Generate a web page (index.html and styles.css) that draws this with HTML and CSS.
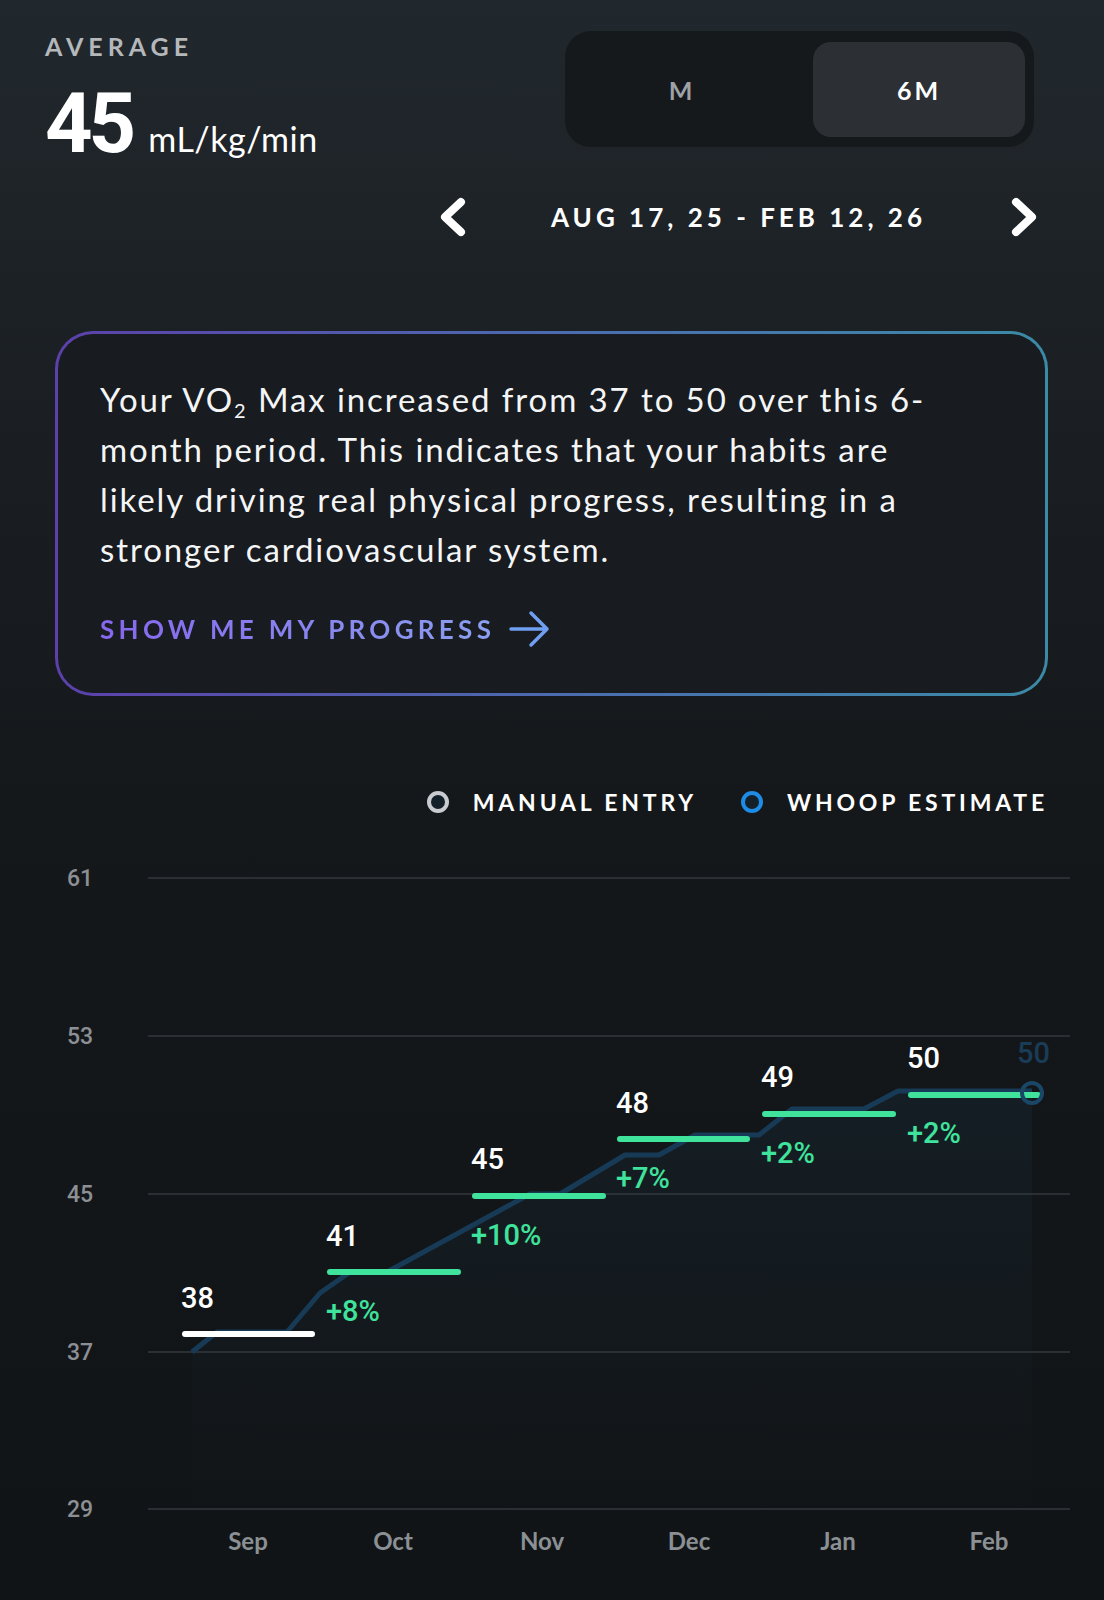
FILE: index.html
```html
<!DOCTYPE html>
<html lang="en">

<head>
    <meta charset="UTF-8">
    <meta name="viewport" content="width=device-width, initial-scale=1.0">
    <title>VO2 Max</title>
    <link rel="stylesheet" href="styles.css">
</head>

<body>
    <div id="main">
        <div class="top">
            <div class="average">
                <div class="average-label">AVERAGE</div>
                <div class="average-value">
                    <span class="big-number">45</span>
                    <span class="unit">mL/kg/min</span>
                </div>
            </div>
            <div class="range">
                <div class="toggle">
                    <div class="toggle-item">M</div>
                    <div class="toggle-item active">6M</div>
                </div>
                <div class="date-nav">
                    <svg class="chevron" width="30" height="40" viewBox="0 0 30 40">
                        <path d="M24 5 L8 20 L24 35" />
                    </svg>
                    <div class="date-text">AUG 17, 25 - FEB 12, 26</div>
                    <svg class="chevron" width="30" height="40" viewBox="0 0 30 40">
                        <path d="M6 5 L22 20 L6 35" />
                    </svg>
                </div>
            </div>
        </div>

        <div class="insight">
            <p class="insight-text">Your VO<sub>2</sub> Max increased from 37 to 50 over this 6-<br>month period. This indicates that your habits are<br>likely driving real physical progress, resulting in a<br>stronger cardiovascular system.</p>
            <div class="insight-link">
                <span class="link-text">SHOW ME MY PROGRESS</span>
                <svg width="42" height="40" viewBox="0 0 42 40">
                    <path d="M2 20 H38 M22 4 L38 20 L22 36" />
                </svg>
            </div>
        </div>

        <div class="legend">
            <div class="legend-item"><span class="dot dot-manual"></span>MANUAL ENTRY</div>
            <div class="legend-item"><span class="dot dot-whoop"></span>WHOOP ESTIMATE</div>
        </div>

        <svg class="chart" width="1104" height="720" viewBox="0 850 1104 720">
            <defs>
                <linearGradient id="area" x1="0" y1="0" x2="0" y2="1">
                    <stop offset="0" stop-color="#1a4058" stop-opacity="0.18" />
                    <stop offset="1" stop-color="#1a4058" stop-opacity="0" />
                </linearGradient>
            </defs>
            <!-- grid -->
            <g class="grid">
                <line x1="148" y1="878" x2="1070" y2="878" />
                <line x1="148" y1="1036" x2="1070" y2="1036" />
                <line x1="148" y1="1194" x2="1070" y2="1194" />
                <line x1="148" y1="1352" x2="1070" y2="1352" />
                <line x1="148" y1="1509" x2="1070" y2="1509" />
            </g>
            <g class="axis-y">
                <text x="67" y="886">61</text>
                <text x="67" y="1044">53</text>
                <text x="67" y="1202">45</text>
                <text x="67" y="1360">37</text>
                <text x="67" y="1517">29</text>
            </g>
            <!-- whoop estimate -->
            <path class="area" d="M192 1352 L217 1332 L287 1332 L320 1293 L350 1272 L387 1272 L530 1194 L560 1194 L625 1155 L659 1155 L695 1135 L759 1135 L792 1109 L864 1109 L898 1091 L1032 1091 L1032 1509 L192 1509 Z" />
            <path class="estimate" d="M192 1352 L217 1332 L287 1332 L320 1293 L350 1272 L387 1272 L530 1194 L560 1194 L625 1155 L659 1155 L695 1135 L759 1135 L792 1109 L864 1109 L898 1091 L1032 1091" />
            <!-- manual entries -->
            <line class="seg seg-first" x1="185" y1="1334" x2="312" y2="1334" />
            <line class="seg" x1="330" y1="1272" x2="458" y2="1272" />
            <line class="seg" x1="475" y1="1196" x2="603" y2="1196" />
            <line class="seg" x1="620" y1="1139" x2="747" y2="1139" />
            <line class="seg" x1="765" y1="1114" x2="893" y2="1114" />
            <line class="seg" x1="911" y1="1095" x2="1038" y2="1095" />
            <circle class="end-dot" cx="1032" cy="1093" r="10" />
            <g class="values">
                <text x="181" y="1308">38</text>
                <text x="326" y="1246">41</text>
                <text x="471" y="1169">45</text>
                <text x="616" y="1113">48</text>
                <text x="761" y="1087">49</text>
                <text x="907" y="1068">50</text>
            </g>
            <text class="value-faded" x="1017" y="1063">50</text>
            <g class="changes">
                <text x="326" y="1321">+8%</text>
                <text x="471" y="1245">+10%</text>
                <text x="616" y="1188">+7%</text>
                <text x="761" y="1163">+2%</text>
                <text x="907" y="1143">+2%</text>
            </g>
            <g class="axis-x">
                <text x="248" y="1550">Sep</text>
                <text x="393" y="1550">Oct</text>
                <text x="542" y="1550">Nov</text>
                <text x="689" y="1550">Dec</text>
                <text x="838" y="1550">Jan</text>
                <text x="989" y="1550">Feb</text>
            </g>
        </svg>
    </div>
</body>

</html>
```

FILE: styles.css
```css
body,
html {
    margin: 0;
    padding: 0;
}

body {
    background: linear-gradient(180deg, #21282d 0px, #1c2125 300px, #15181b 800px, #111416 1600px);
    min-height: 1600px;
    color: #fff;
    font-family: "Lato", "Liberation Sans", sans-serif;
}

#main {
    width: 1104px;
}

.top {
    display: flex;
    justify-content: space-between;
    padding: 31px 64px 0 45px;
}

.average-label {
    margin-top: 3px;
    font-size: 25px;
    line-height: 25px;
    font-weight: 700;
    letter-spacing: 5px;
    color: #b4b8bb;
}

.average-value {
    display: flex;
    align-items: baseline;
    margin-top: 23px;
}

.big-number {
    font-family: "Roboto", sans-serif;
    font-size: 83px;
    line-height: 83px;
    font-weight: 700;
    letter-spacing: -4px;
}

.unit {
    margin-left: 16px;
    font-size: 34px;
    letter-spacing: 0.5px;
}

.range {
    display: flex;
    flex-direction: column;
    align-items: flex-end;
    width: 603px;
}

.toggle {
    display: grid;
    grid-template-columns: 214px 212px;
    column-gap: 24px;
    height: 95px;
    padding: 11px 9px 10px 10px;
    margin-right: 6px;
    background: #16191c;
    border-radius: 26px;
}

.toggle-item {
    display: flex;
    align-items: center;
    justify-content: center;
    font-size: 25px;
    font-weight: 700;
    letter-spacing: 3px;
    color: #9ea2a6;
    border-radius: 18px;
}

.toggle-item.active {
    background: #2c3034;
    color: #fff;
}

.date-nav {
    display: flex;
    justify-content: space-between;
    align-items: center;
    width: 603px;
    height: 40px;
    margin-top: 50px;
}

.chevron path {
    fill: none;
    stroke: #fff;
    stroke-width: 8;
    stroke-linecap: round;
    stroke-linejoin: round;
}

.date-text {
    font-size: 26px;
    font-weight: 700;
    letter-spacing: 4px;
}

.insight {
    width: 993px;
    margin: 94px 0 0 55px;
    padding: 40px 0 44px 42px;
    box-sizing: border-box;
    border: 3px solid transparent;
    border-radius: 38px;
    background: linear-gradient(#181b1f, #181b1f) padding-box,
        linear-gradient(90deg, #5c40ab, #4a6fb0 55%, #3b8aa6) border-box;
}

.insight-text {
    margin: 0;
    font-size: 33px;
    line-height: 50px;
    letter-spacing: 1.9px;
    color: #f4f5f6;
}

.insight-text sub {
    font-size: 20px;
    line-height: 0;
    vertical-align: -6px;
}

.insight-link {
    display: flex;
    align-items: center;
    height: 40px;
    margin-top: 35px;
}

.link-text {
    font-size: 26px;
    font-weight: 700;
    letter-spacing: 4.3px;
    background: linear-gradient(90deg, #8667ee, #8b9ff0);
    -webkit-background-clip: text;
    background-clip: text;
    color: transparent;
}

.insight-link svg {
    margin-left: 14px;
}

.insight-link path {
    fill: none;
    stroke: #6f9ff0;
    stroke-width: 3.5;
    stroke-linecap: round;
    stroke-linejoin: round;
}

.legend {
    display: flex;
    justify-content: flex-end;
    align-items: center;
    gap: 44px;
    height: 24px;
    margin-top: 94px;
    padding-right: 56px;
}

.legend-item {
    display: flex;
    align-items: center;
    gap: 24px;
    font-size: 23px;
    font-weight: 700;
    letter-spacing: 3.8px;
}

.dot {
    width: 14px;
    height: 14px;
    border-radius: 50%;
    border: 4px solid #c8ccd0;
    background: #142029;
}

.dot-whoop {
    border-color: #1e8be6;
}

.chart {
    display: block;
    margin-top: 36px;
}

.grid line {
    stroke: #2b2f33;
    stroke-width: 2;
}

.axis-y text {
    font-family: "Roboto", sans-serif;
    font-size: 23px;
    font-weight: 500;
    fill: #8c9094;
}

.area {
    fill: url(#area);
}

.estimate {
    fill: none;
    stroke: #173b57;
    stroke-width: 5;
    stroke-linejoin: round;
}

.seg {
    stroke: #3fe39c;
    stroke-width: 6;
    stroke-linecap: round;
}

.seg-first {
    stroke: #fff;
}

.end-dot {
    fill: none;
    stroke: #1a4767;
    stroke-width: 4;
}

.values text,
.changes text,
.value-faded {
    font-family: "Roboto", sans-serif;
    font-size: 29px;
    font-weight: 500;
    fill: #fff;
}

.changes text {
    fill: #3fe39c;
}

.value-faded {
    fill: #1a3c57;
}

.axis-x text {
    font-size: 24px;
    font-weight: 700;
    fill: #8b9094;
    text-anchor: middle;
}
```
